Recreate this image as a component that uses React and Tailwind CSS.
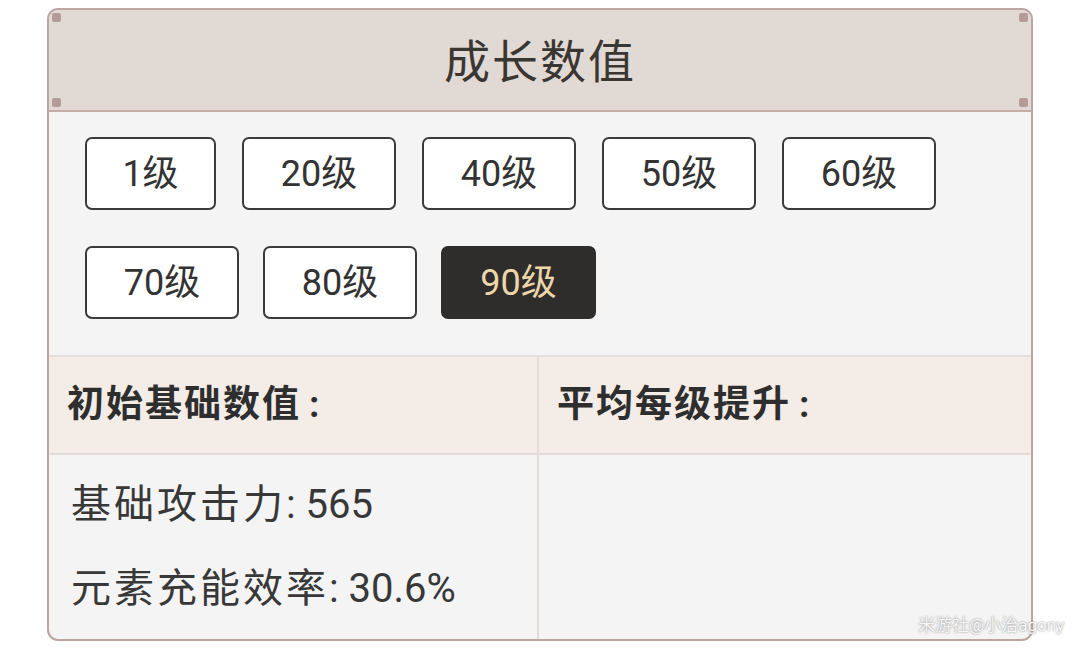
import React from 'react'

const levels = [
  ['1级', 'w-[131px]'],
  ['20级', 'w-[154px]'],
  ['40级', 'w-[154px]'],
  ['50级', 'w-[154px]'],
  ['60级', 'w-[154px]'],
]
const levels2 = ['70级', '80级']

const font = { fontFamily: 'Roboto, "Noto Sans CJK SC", sans-serif' }

function Corner({ className }) {
  return <span className={`absolute w-[9px] h-[9px] rounded-[2px] bg-[#b59b97] ${className}`} />
}

function LevelButton({ label, width, active }) {
  return (
    <button
      className={`${width} h-[73px] rounded-[7px] border-2 flex items-center justify-center text-[36px] ${
        active
          ? 'bg-[#2f2d2b] border-[#2f2d2b] text-[#ecd6aa]'
          : 'bg-white border-[#3b3b3b] text-[#333]'
      }`}
    >
      {label}
    </button>
  )
}

function StatLine({ name, value }) {
  return (
    <div className="flex items-center h-[44px] leading-[44px] text-[40px]">
      <span className="tracking-[3px]">{name}</span>
      <span>: {value}</span>
    </div>
  )
}

function HeadCell({ text, divider }) {
  return (
    <div
      className={`bg-[#f3ece7] border-b-2 border-[#e3dcd8] flex items-center pl-[18px] ${
        divider ? 'border-r-2' : ''
      }`}
    >
      <span className="text-[37px] font-bold text-[#2e2e2e] tracking-[2px]">{text}</span>
      <span className="text-[37px] font-bold text-[#2e2e2e] ml-[8px]">:</span>
    </div>
  )
}

export default function App() {
  return (
    <div className="w-[1080px] h-[652px] bg-white relative" style={font}>
      <div className="absolute left-0 top-0 w-full h-full pt-[8px] pl-[47px]">
        <div className="w-[986px] h-[633px] border-2 border-[#bda6a2] rounded-[11px] overflow-hidden bg-[#f4f4f4] flex flex-col">
          <div className="relative h-[102px] bg-[#e1d9d3] border-b-2 border-[#c7aca8] flex items-center justify-center shrink-0">
            <span className="text-[46px] text-[#3a3632] tracking-[2px] pt-[4px]">成长数值</span>
            <Corner className="left-[3px] top-[3px]" />
            <Corner className="left-[3px] bottom-[3px]" />
            <Corner className="right-[3px] top-[3px]" />
            <Corner className="right-[3px] bottom-[3px]" />
          </div>

          <div className="pt-[25px] pl-[36px] pb-[36px] flex flex-col gap-[36px] shrink-0">
            <div className="flex gap-[26px]">
              {levels.map(([l, w]) => (
                <LevelButton key={l} label={l} width={w} />
              ))}
            </div>
            <div className="flex gap-[24px]">
              {levels2.map((l) => (
                <LevelButton key={l} label={l} width="w-[154px]" />
              ))}
              <LevelButton label="90级" width="w-[155px]" active />
            </div>
          </div>

          <div className="flex-1 grid grid-cols-[490px_1fr] grid-rows-[98px_1fr] border-t-2 border-[#e6dfdb]">
            <HeadCell text="初始基础数值" divider />
            <HeadCell text="平均每级提升" />
            <div className="border-r-2 border-[#e3dcd8] pl-[22px] pt-[28px] flex flex-col gap-[40px] text-[#383838]">
              <StatLine name="基础攻击力" value="565" />
              <StatLine name="元素充能效率" value="30.6%" />
            </div>
            <div />
          </div>
        </div>
      </div>
      <span className="absolute left-[918px] top-[613px] text-[17px] text-[#f7f7f7] [text-shadow:0_0_2px_#7a7a7a]">
        米游社@小治agony
      </span>
    </div>
  )
}
